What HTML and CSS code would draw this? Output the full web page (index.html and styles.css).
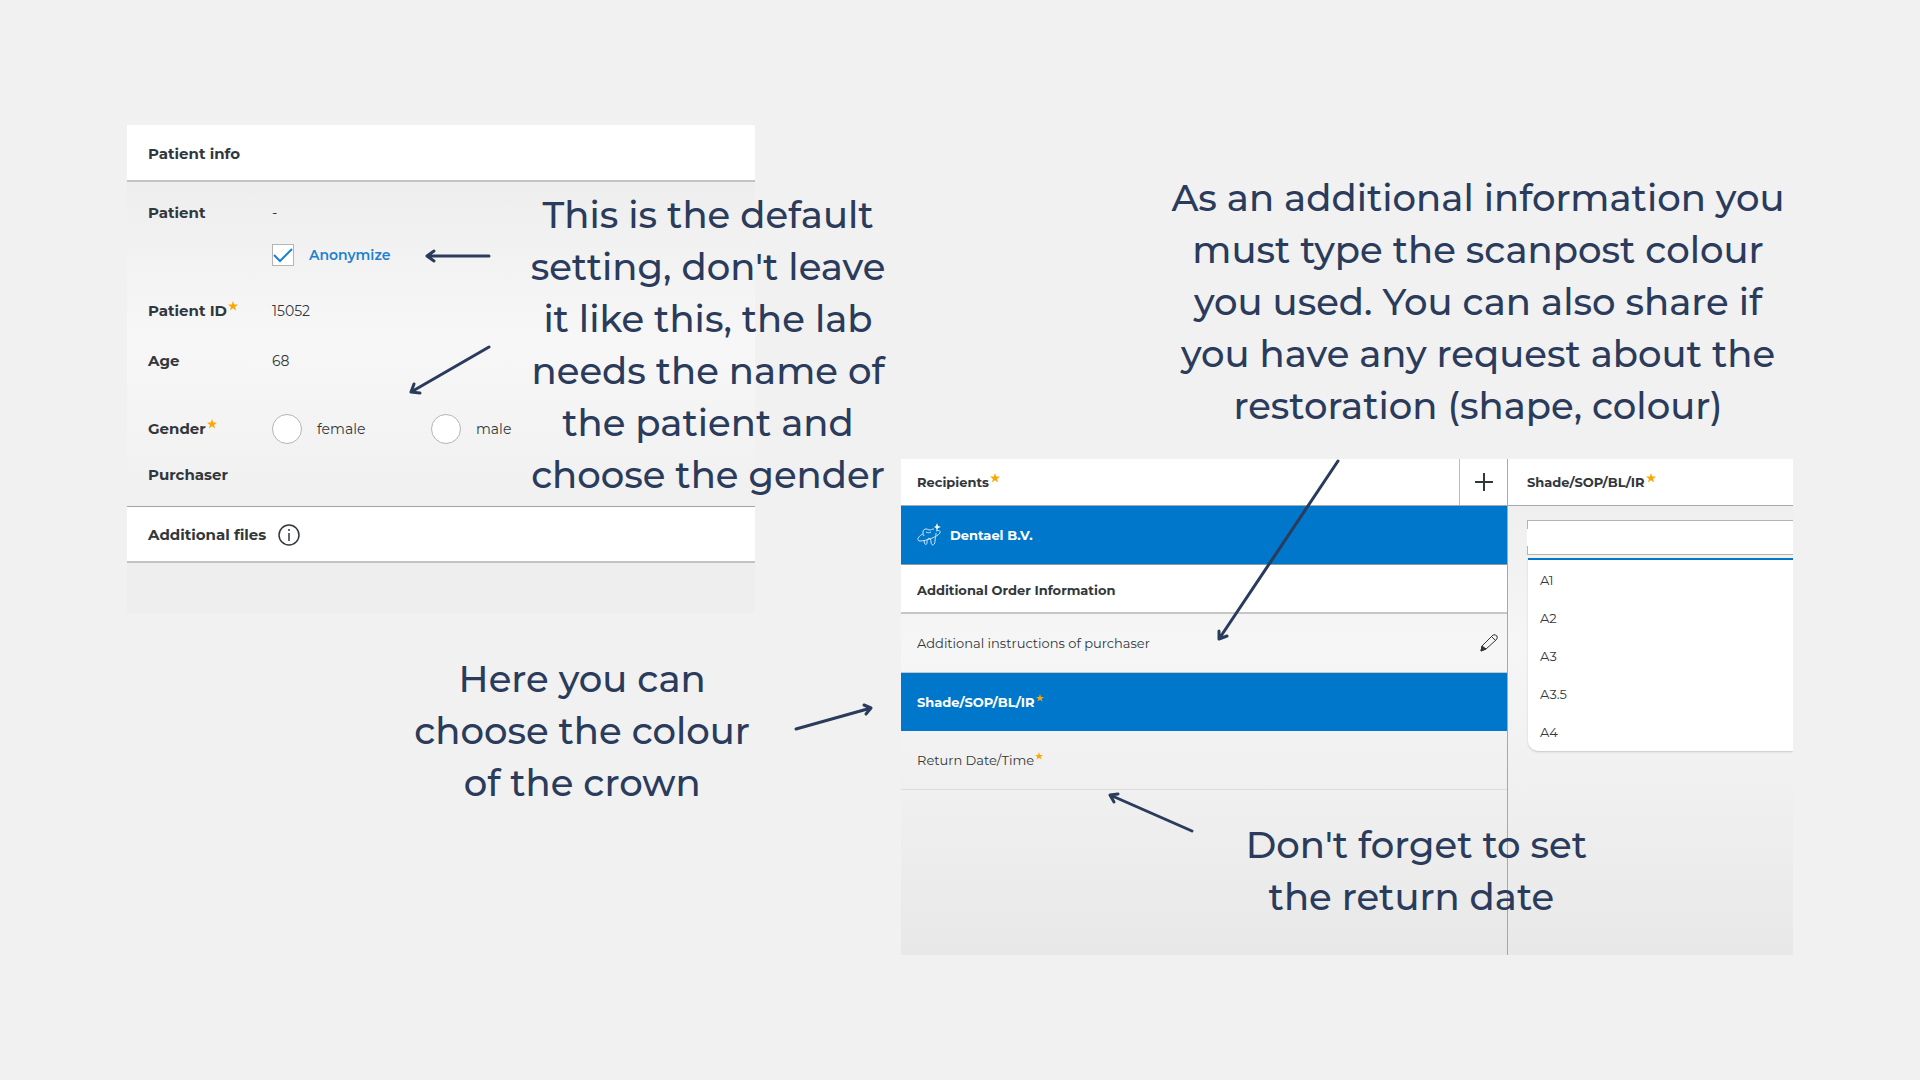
FILE: index.html
```html
<!DOCTYPE html>
<html lang="en">
<head>
<meta charset="utf-8">
<meta name="viewport" content="width=device-width, initial-scale=1">
<title>Order form guide</title>
<link rel="stylesheet" href="styles.css">
</head>
<body>
<svg class="defs" aria-hidden="true">
  <symbol id="star" viewBox="0 0 10 10"><path d="M5 0 6.2 3.6H10L7 5.9 8.1 9.5 5 7.3 1.9 9.5 3 5.9 0 3.6H3.8Z"/></symbol>
</svg>
<main class="board">
  <section class="column column-patient">
    <form class="panel patient">
      <h2 class="panel-head patient-head">Patient info</h2>
      <div class="fields">
        <div class="field"><span class="name">Patient</span><span>-</span></div>
        <div class="field">
          <label class="choice choice-tick">
            <input class="tick" type="checkbox" checked>
            <svg class="tick-mark" viewBox="0 0 22 22" aria-hidden="true"><path d="M2 11 8 17 20 5"/></svg>
            <span>Anonymize</span>
          </label>
        </div>
        <div class="field field-tall field-id"><span class="name">Patient ID<svg class="star"><use href="#star"/></svg></span><span>15052</span></div>
        <div class="field field-tall"><span class="name">Age</span><span>68</span></div>
        <div class="field field-tall field-gender">
          <span class="name">Gender<svg class="star"><use href="#star"/></svg></span>
          <div class="genders">
            <label class="choice"><input class="dot" type="radio" name="gender"><span>female</span></label>
            <label class="choice"><input class="dot" type="radio" name="gender"><span>male</span></label>
          </div>
        </div>
        <div class="field"><span class="name">Purchaser</span></div>
      </div>
      <h2 class="panel-head files-head">Additional files
        <svg class="info" viewBox="0 0 22 22" aria-hidden="true"><circle cx="11" cy="11" r="10"/><path d="M11 9V17M11 5V7"/></svg>
      </h2>
      <div class="files"></div>
      <svg class="arrow arrow-anonymize" viewBox="0 0 66 14" aria-hidden="true"><path d="M64 7H2M9 2 2 7 9 12"/></svg>
      <svg class="arrow arrow-gender" viewBox="0 0 82 52" aria-hidden="true"><path d="M80 2 2 47M5 39 2 47 11 48"/></svg>
      <p class="note note-default">This is the default<br>setting, don't leave<br>it like this, the lab<br>needs the name of<br>the patient and<br>choose the gender</p>
    </form>
    <div class="shade-hint">
      <p class="note">Here you can<br>choose the colour<br>of the crown</p>
      <svg class="arrow" width="80" height="56" viewBox="0 0 80 56" aria-hidden="true"><path d="M2 26 77 5M70 2 77 5 72 11"/></svg>
    </div>
  </section>

  <section class="column column-order">
    <p class="note note-info">As an additional information you<br>must type the scanpost colour<br>you used. You can also share if<br>you have any request about the<br>restoration (shape, colour)</p>
    <form class="panel order">
      <div class="order-list">
        <div class="order-head">
          <h2>Recipients<svg class="star"><use href="#star"/></svg></h2>
          <button class="add" type="button" aria-label="Add recipient"><svg width="18" height="18" viewBox="0 0 18 18"><path d="M9 0V18M0 9H18"/></svg></button>
        </div>
        <button class="row row-active row-recipient" type="button">
          <svg class="tooth" width="24" height="24" viewBox="0 0 24 24" aria-hidden="true">
            <path d="M7 13C5 9 6 6 9 6C11 6 11 7 13 7C14 7 15 6 17 6M19 10C19 14 18 15 18 18C18 23 14 23 14 19C14 14 10 14 10 19C10 23 7 22 7 17"/>
            <path d="M6 11C1 13 -1 18 3 18C9 18 20 14 23 10C24 8 22 7 19 8M9 9C11 10 12 10 14 9"/>
            <path class="spark" d="M20 0 21 3 24 4 21 5 20 8 19 5 17 4 19 3Z"/>
          </svg>
          Dentael B.V.
        </button>
        <h2 class="order-subhead">Additional Order Information</h2>
        <button class="row row-line" type="button"><span>Additional instructions of purchaser</span>
          <svg class="pencil" width="18" height="18" viewBox="0 0 18 18" aria-hidden="true"><path d="M2 12 13 1Q15 0 17 2 18 4 16 6L6 15 1 17ZM12 3 15 6"/><path class="tip" d="M2 12 6 15 1 17Z"/></svg>
        </button>
        <button class="row row-active" type="button">Shade/SOP/BL/IR<svg class="star star-small"><use href="#star"/></svg></button>
        <button class="row row-last" type="button">Return Date/Time<svg class="star star-small"><use href="#star"/></svg></button>
      </div>
      <div class="shade">
        <h2 class="shade-head"><label for="shade">Shade/SOP/BL/IR</label><svg class="star"><use href="#star"/></svg></h2>
        <div class="shade-body">
          <input class="shade-input" id="shade" type="text">
          <ul class="options">
            <li><button type="button">A1</button></li>
            <li><button type="button">A2</button></li>
            <li><button type="button">A3</button></li>
            <li><button type="button">A3.5</button></li>
            <li><button type="button">A4</button></li>
          </ul>
        </div>
      </div>
      <svg class="arrow arrow-instructions" viewBox="0 0 124 184" aria-hidden="true"><path d="M121 2 2 180M2 172 2 180 10 177"/></svg>
      <svg class="arrow arrow-return" viewBox="0 0 86 42" aria-hidden="true"><path d="M84 39 2 3M10 2 2 3 6 10"/></svg>
      <p class="note note-return">Don't forget to set<br>the return date&nbsp;</p>
    </form>
  </section>
</main>
</body>
</html>
```
FILE: styles.css
```css
* { box-sizing: border-box; }

body {
  margin: 0;
  background: #f1f1f1;
  color: #32373c;
  font: 400 14px/20px Montserrat, Inter, "Liberation Sans", sans-serif;
}

h2, p, ul { margin: 0; padding: 0; }
h2 { font-size: 15px; font-weight: 700; line-height: 20px; }
button, input { font: inherit; color: inherit; margin: 0; }
button { border: 0; background: none; padding: 0; text-align: left; }

.defs { position: absolute; width: 0; height: 0; }

.board {
  display: grid;
  grid-template-columns: 127fr 774fr 892fr 127fr;
  align-items: start;
  padding: 125px 0;
}
.column-patient { grid-column: 2; }
.column-order { grid-column: 3; padding-top: 47px; }

.panel { position: relative; }

.note {
  color: #2a3b5c;
  font-size: 37px;
  font-weight: 500;
  line-height: 52px;
  text-align: center;
  white-space: nowrap;
}

.arrow {
  flex: none;
  fill: none;
  stroke: #2a3b5c;
  stroke-width: 3;
  stroke-linecap: round;
  stroke-linejoin: round;
}

.star { width: 10px; height: 10px; margin-left: 1px; fill: #faa800; vertical-align: 5px; }
.star-small { width: 8px; height: 8px; align-self: center; margin-bottom: 8px; }

/* Patient form */
.patient { width: 81.2%; }
.panel-head {
  display: flex;
  align-items: center;
  gap: 12px;
  height: 57px;
  padding: 2px 21px 0;
  background: #fff;
  border-bottom: 2px solid #c3c3c3;
}
.files-head { border-top: 1px solid #a5a5a5; }
.fields {
  padding: 10px 21px;
  background: linear-gradient(#eeeeee, #f7f7f7 50%, #f0f0f0);
}
.field {
  display: grid;
  grid-template-columns: 124px 1fr;
  align-items: center;
  height: 42px;
}
.field-tall { height: 50px; }
.field-id { margin-top: 10px; }
.field-gender { margin-top: 18px; }
.name { font-size: 15px; font-weight: 700; }
.genders { display: grid; grid-template-columns: 159px 1fr; }
.choice { position: relative; display: flex; align-items: center; gap: 15px; }
.choice-tick { grid-column: 2; color: #1e7fd2; font-weight: 600; }
.tick, .dot {
  appearance: none;
  width: 22px;
  height: 22px;
  background: #fff;
  border: 1px solid #b5b5b5;
}
.dot { width: 30px; height: 30px; border-radius: 50%; }
.tick-mark {
  position: absolute;
  left: 0;
  width: 22px;
  height: 22px;
  fill: none;
  stroke: #1e7fd2;
  stroke-width: 2;
}
.info { width: 22px; height: 22px; fill: none; stroke: #32373c; stroke-width: 1.5; }
.files { height: 50px; background: #eeeeee; }

.arrow-anonymize { position: absolute; left: 298px; top: 124px; width: 66px; height: 14px; }
.arrow-gender { position: absolute; left: 282px; top: 220px; width: 82px; height: 52px; }
.note-default { position: absolute; left: 391px; top: 64px; width: 380px; }

.shade-hint {
  display: flex;
  align-items: center;
  justify-content: flex-end;
  gap: 44px;
  margin-top: 40px;
  padding-right: 27px;
}

/* Order form */
.note-info { width: 630px; margin-left: auto; }
.order {
  display: grid;
  grid-template-columns: 607fr 285fr;
  margin-top: 27px;
  background: linear-gradient(#eeefee 46px, #f5f6f5 190px, #f0f0f0 330px, #e7e8e7);
  font-size: 13px;
}
.order h2 { font-size: 13px; }
.order-list {
  display: flex;
  flex-direction: column;
  min-height: 496px;
  border-right: 1px solid #a8a8a8;
}
.order-head, .shade-head, .order-subhead {
  display: flex;
  align-items: center;
  height: 47px;
  background: #fff;
  border-bottom: 1px solid #a8a8a8;
}
.order-head { justify-content: space-between; padding-left: 16px; }
.order-subhead { height: 49px; padding: 2px 0 0 16px; border-bottom: 2px solid #c6c6c6; }
.add {
  display: flex;
  align-items: center;
  justify-content: center;
  width: 48px;
  align-self: stretch;
  border-left: 1px solid #bdbdbd;
}
.add svg { stroke: #32373c; stroke-width: 2; }
.row {
  display: flex;
  align-items: center;
  height: 59px;
  padding: 0 9px 0 16px;
}
.row-active { height: 58px; background: #0077cb; color: #fff; font-weight: 700; }
.row-recipient { height: 59px; gap: 9px; border-bottom: 1px solid #8e9aa3; }
.row-line { justify-content: space-between; border-bottom: 1px solid #c6c6c6; }
.row-last { border-bottom: 1px solid #dcdcdc; }
.tooth { fill: none; stroke: #cfe6f7; stroke-width: 1; }
.tooth .spark { fill: #fff; stroke: none; }
.pencil { fill: none; stroke: #32373c; stroke-width: 1; }
.pencil .tip { fill: #32373c; }

.shade-head { padding-left: 19px; }
.shade-head .star, .order-head .star { vertical-align: 4px; }
.shade-head .star { margin-bottom: 8px; }
.shade-body { padding: 14px 0 0 19px; }
.shade-input {
  display: block;
  width: 100%;
  height: 35px;
  padding: 0 12px;
  border: solid #b4b4b4;
  border-width: 1px 0;
  border-radius: 0;
  background: linear-gradient(#b4b4b4 8px, #fff 8px 25px, #b4b4b4 25px) left / 1px 100% no-repeat #fff;
}
.options {
  margin: 3px 0 0 1px;
  padding-top: 1px;
  border-top: 2px solid #0077cb;
  border-radius: 0 0 0 10px;
  background: #fff;
  box-shadow: 0 1px 2px #c8c8c8;
  clip-path: inset(0 0 -4px -4px);
  list-style: none;
}
.options button { display: block; width: 100%; height: 38px; padding-left: 12px; }

.arrow-instructions { position: absolute; left: 35.4%; top: 0; width: 124px; height: 184px; }
.arrow-return { position: absolute; left: 23.2%; top: 333px; width: 86px; height: 42px; }
.note-return { position: absolute; left: 37.6%; top: 360px; width: 360px; }
```
